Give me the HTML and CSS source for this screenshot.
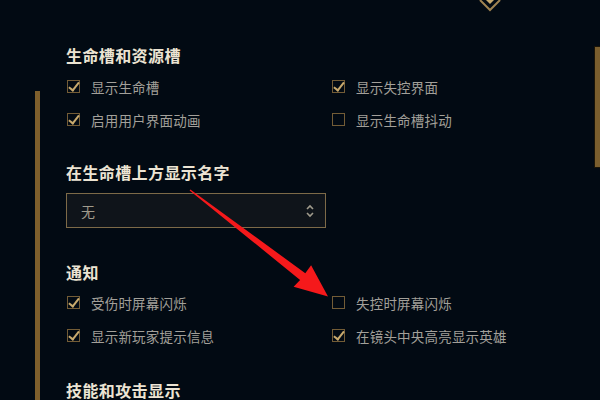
FILE: index.html
```html
<!DOCTYPE html>
<html lang="zh-CN">
<head>
    <meta charset="UTF-8">
    <meta name="viewport" content="width=device-width, initial-scale=1.0">
    <title>界面设置</title>
    <link rel="stylesheet" href="styles.css">
</head>
<body>
    <div class="frame">
        <svg class="crest" width="24" height="12" viewBox="0 0 24 12">
            <path d="M2 0 L12 10 L22 0" fill="none" stroke="#a08452" stroke-width="2"/>
            <path d="M8 0 L12 4 L16 0 Z" fill="#c8aa6e"/>
        </svg>
        <div class="side-bar"></div>
        <div class="scroll-thumb"></div>

        <div class="settings">
            <h2 class="group-title first">生命槽和资源槽</h2>
            <div class="options">
                <label class="option"><span class="box checked"></span>显示生命槽</label>
                <label class="option"><span class="box checked"></span>显示失控界面</label>
                <label class="option"><span class="box checked"></span>启用用户界面动画</label>
                <label class="option"><span class="box"></span>显示生命槽抖动</label>
            </div>

            <h2 class="group-title">在生命槽上方显示名字</h2>
            <div class="select">
                <span>无</span>
                <svg width="10" height="16" viewBox="0 0 10 16">
                    <path d="M2 6 L5 3 L8 6 M2 10 L5 13 L8 10" fill="none" stroke="#a09b8c" stroke-width="1.6"/>
                </svg>
            </div>

            <h2 class="group-title notify">通知</h2>
            <div class="options">
                <label class="option"><span class="box checked"></span>受伤时屏幕闪烁</label>
                <label class="option"><span class="box"></span>失控时屏幕闪烁</label>
                <label class="option"><span class="box checked"></span>显示新玩家提示信息</label>
                <label class="option"><span class="box checked"></span>在镜头中央高亮显示英雄</label>
            </div>

            <h2 class="group-title">技能和攻击显示</h2>
        </div>

        <svg class="pointer" width="600" height="400" viewBox="0 0 600 400">
            <polygon points="189.6,190.5 190.4,189.5 305.3,273.2 311.1,265.2 328,296.5 293.6,286.7 300.1,279.9" fill="#f5191b"/>
        </svg>
    </div>
</body>
</html>
```

FILE: styles.css
```css
body {
    margin: 0;
    background: #020a13;
    font-family: "Noto Sans CJK SC", "Noto Sans", sans-serif;
}
.frame {
    position: relative;
    width: 600px;
    height: 400px;
    overflow: hidden;
}
.crest {
    position: absolute;
    left: 478px;
    top: 0;
}
.side-bar {
    position: absolute;
    left: 35px;
    top: 91px;
    bottom: 0;
    width: 5px;
    background: #7e5f2c;
}
.scroll-thumb {
    position: absolute;
    left: 595px;
    top: 47px;
    width: 5px;
    height: 120px;
    background: #7a5e2e;
    box-shadow: 0 0 0 1px #1a1408;
}
.settings {
    padding: 45px 0 0 66px;
}
.group-title {
    margin: 0;
    height: 20px;
    line-height: 20px;
    font-size: 16px;
    font-weight: bold;
    color: #ece4d3;
    letter-spacing: 0.4px;
}
.group-title.first {
    margin-bottom: 5px;
}
.options {
    display: grid;
    grid-template-columns: 265px 1fr;
    margin-bottom: 26px;
}
.notify {
    margin-top: 34px;
    margin-bottom: 4px;
}
.notify + .options {
    margin-bottom: 28px;
}
.option {
    display: flex;
    align-items: center;
    height: 33px;
    font-size: 13.5px;
    letter-spacing: 0.2px;
    color: #a3a09a;
}
.box {
    position: relative;
    width: 11px;
    height: 11px;
    border: 1px solid #735c36;
    margin-right: 11px;
    margin-left: 1px;
}
.box.checked::after {
    content: "";
    position: absolute;
    left: 3px;
    top: -1px;
    width: 4px;
    height: 9px;
    border-right: 2px solid #c8aa6e;
    border-bottom: 2px solid #c8aa6e;
    transform: rotate(38deg);
}
.select {
    display: flex;
    align-items: center;
    justify-content: space-between;
    box-sizing: border-box;
    width: 260px;
    height: 35px;
    margin-top: 11px;
    padding: 0 10px 0 14px;
    background: #0f141a;
    border: 1px solid #7d6a48;
    font-size: 14px;
    color: #a09b8c;
}
.pointer {
    position: absolute;
    left: 0;
    top: 0;
}
```
